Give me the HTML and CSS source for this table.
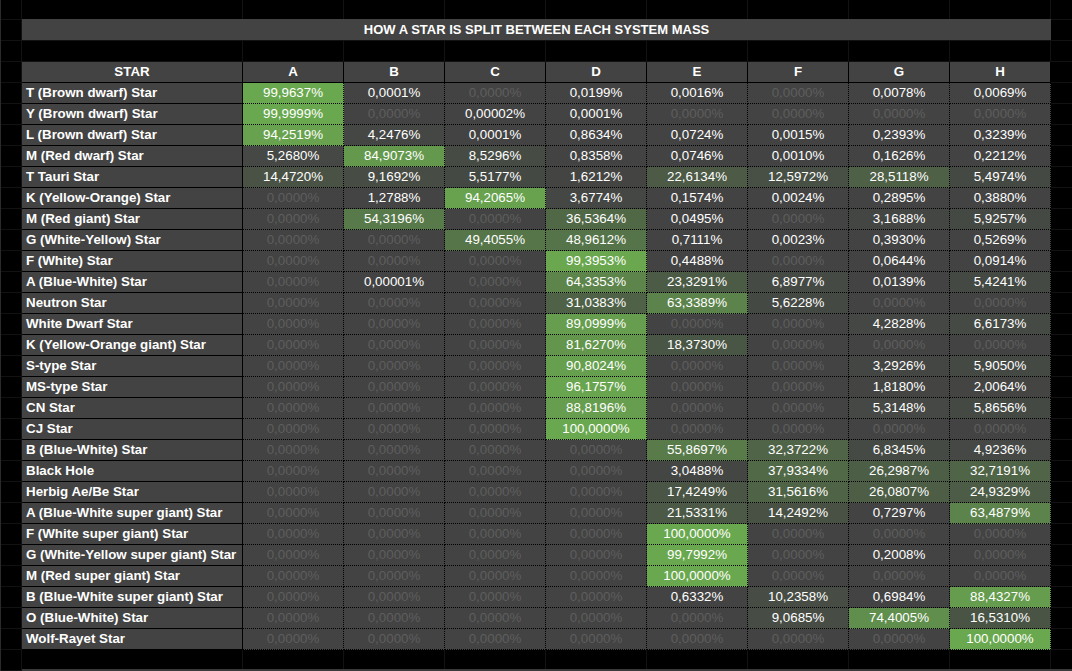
FILE: index.html
```html
<!DOCTYPE html>
<html lang="en">
<head>
<meta charset="utf-8">
<title>How a star is split between each system mass</title>
<link rel="stylesheet" href="styles.css">
</head>
<body>
<main class="page">
  <div class="title">HOW A STAR IS SPLIT BETWEEN EACH SYSTEM MASS</div>
  <div class="sheet">
    <div class="h">STAR</div><div class="h">A</div><div class="h">B</div><div class="h">C</div><div class="h">D</div><div class="h">E</div><div class="h">F</div><div class="h">G</div><div class="h">H</div>

    <div class="lbl">T (Brown dwarf) Star</div><div class="v" style="background:#6aa84f">99,9637%</div><div class="v">0,0001%</div><div class="v z">0,0000%</div><div class="v">0,0199%</div><div class="v">0,0016%</div><div class="v z">0,0000%</div><div class="v">0,0078%</div><div class="v">0,0069%</div>

    <div class="lbl">Y (Brown dwarf) Star</div><div class="v" style="background:#6aa84f">99,9999%</div><div class="v z">0,0000%</div><div class="v">0,00002%</div><div class="v">0,0001%</div><div class="v z">0,0000%</div><div class="v z">0,0000%</div><div class="v z">0,0000%</div><div class="v z">0,0000%</div>

    <div class="lbl">L (Brown dwarf) Star</div><div class="v" style="background:#68a24e">94,2519%</div><div class="v" style="background:#454744">4,2476%</div><div class="v">0,0001%</div><div class="v">0,8634%</div><div class="v">0,0724%</div><div class="v">0,0015%</div><div class="v">0,2393%</div><div class="v">0,3239%</div>

    <div class="lbl">M (Red dwarf) Star</div><div class="v" style="background:#454844">5,2680%</div><div class="v" style="background:#64994d">84,9073%</div><div class="v" style="background:#464c44">8,5296%</div><div class="v">0,8358%</div><div class="v">0,0746%</div><div class="v">0,0010%</div><div class="v">0,1626%</div><div class="v">0,2212%</div>

    <div class="lbl">T Tauri Star</div><div class="v" style="background:#495245">14,4720%</div><div class="v" style="background:#474c44">9,1692%</div><div class="v" style="background:#454944">5,5177%</div><div class="v" style="background:#444543">1,6212%</div><div class="v" style="background:#4c5a46">22,6134%</div><div class="v" style="background:#485045">12,5972%</div><div class="v" style="background:#4e6046">28,5118%</div><div class="v" style="background:#454944">5,4974%</div>

    <div class="lbl">K (Yellow-Orange) Star</div><div class="v z">0,0000%</div><div class="v" style="background:#434443">1,2788%</div><div class="v" style="background:#68a24e">94,2065%</div><div class="v" style="background:#444743">3,6774%</div><div class="v">0,1574%</div><div class="v">0,0024%</div><div class="v">0,2895%</div><div class="v">0,3880%</div>

    <div class="lbl">M (Red giant) Star</div><div class="v z">0,0000%</div><div class="v" style="background:#587a4a">54,3196%</div><div class="v z">0,0000%</div><div class="v" style="background:#516847">36,5364%</div><div class="v">0,0495%</div><div class="v z">0,0000%</div><div class="v" style="background:#444643">3,1688%</div><div class="v" style="background:#454944">5,9257%</div>

    <div class="lbl">G (White-Yellow) Star</div><div class="v z">0,0000%</div><div class="v z">0,0000%</div><div class="v" style="background:#567549">49,4055%</div><div class="v" style="background:#567449">48,9612%</div><div class="v">0,7111%</div><div class="v">0,0023%</div><div class="v">0,3930%</div><div class="v">0,5269%</div>

    <div class="lbl">F (White) Star</div><div class="v z">0,0000%</div><div class="v z">0,0000%</div><div class="v z">0,0000%</div><div class="v" style="background:#6aa74f">99,3953%</div><div class="v">0,4488%</div><div class="v z">0,0000%</div><div class="v">0,0644%</div><div class="v">0,0914%</div>

    <div class="lbl">A (Blue-White) Star</div><div class="v z">0,0000%</div><div class="v">0,00001%</div><div class="v z">0,0000%</div><div class="v" style="background:#5c844b">64,3353%</div><div class="v" style="background:#4c5b46">23,3291%</div><div class="v" style="background:#464a44">6,8977%</div><div class="v">0,0139%</div><div class="v" style="background:#454944">5,4241%</div>

    <div class="lbl">Neutron Star</div><div class="v z">0,0000%</div><div class="v z">0,0000%</div><div class="v z">0,0000%</div><div class="v" style="background:#4f6247">31,0383%</div><div class="v" style="background:#5c834b">63,3389%</div><div class="v" style="background:#454944">5,6228%</div><div class="v z">0,0000%</div><div class="v z">0,0000%</div>

    <div class="lbl">White Dwarf Star</div><div class="v z">0,0000%</div><div class="v z">0,0000%</div><div class="v z">0,0000%</div><div class="v" style="background:#669d4e">89,0999%</div><div class="v z">0,0000%</div><div class="v z">0,0000%</div><div class="v" style="background:#454744">4,2828%</div><div class="v" style="background:#464a44">6,6173%</div>

    <div class="lbl">K (Yellow-Orange giant) Star</div><div class="v z">0,0000%</div><div class="v z">0,0000%</div><div class="v z">0,0000%</div><div class="v" style="background:#63954d">81,6270%</div><div class="v" style="background:#4a5645">18,3730%</div><div class="v z">0,0000%</div><div class="v z">0,0000%</div><div class="v z">0,0000%</div>

    <div class="lbl">S-type Star</div><div class="v z">0,0000%</div><div class="v z">0,0000%</div><div class="v z">0,0000%</div><div class="v" style="background:#669f4e">90,8024%</div><div class="v z">0,0000%</div><div class="v z">0,0000%</div><div class="v" style="background:#444643">3,2926%</div><div class="v" style="background:#454944">5,9050%</div>

    <div class="lbl">MS-type Star</div><div class="v z">0,0000%</div><div class="v z">0,0000%</div><div class="v z">0,0000%</div><div class="v" style="background:#69a44f">96,1757%</div><div class="v z">0,0000%</div><div class="v z">0,0000%</div><div class="v" style="background:#444543">1,8180%</div><div class="v" style="background:#444543">2,0064%</div>

    <div class="lbl">CN Star</div><div class="v z">0,0000%</div><div class="v z">0,0000%</div><div class="v z">0,0000%</div><div class="v" style="background:#669d4e">88,8196%</div><div class="v z">0,0000%</div><div class="v z">0,0000%</div><div class="v" style="background:#454844">5,3148%</div><div class="v" style="background:#454944">5,8656%</div>

    <div class="lbl">CJ Star</div><div class="v z">0,0000%</div><div class="v z">0,0000%</div><div class="v z">0,0000%</div><div class="v" style="background:#6aa84f">100,0000%</div><div class="v z">0,0000%</div><div class="v z">0,0000%</div><div class="v z">0,0000%</div><div class="v z">0,0000%</div>

    <div class="lbl">B (Blue-White) Star</div><div class="v z">0,0000%</div><div class="v z">0,0000%</div><div class="v z">0,0000%</div><div class="v z">0,0000%</div><div class="v" style="background:#597b4a">55,8697%</div><div class="v" style="background:#506447">32,3722%</div><div class="v" style="background:#464a44">6,8345%</div><div class="v" style="background:#454844">4,9236%</div>

    <div class="lbl">Black Hole</div><div class="v z">0,0000%</div><div class="v z">0,0000%</div><div class="v z">0,0000%</div><div class="v z">0,0000%</div><div class="v" style="background:#444643">3,0488%</div><div class="v" style="background:#526948">37,9334%</div><div class="v" style="background:#4d5e46">26,2987%</div><div class="v" style="background:#506447">32,7191%</div>

    <div class="lbl">Herbig Ae/Be Star</div><div class="v z">0,0000%</div><div class="v z">0,0000%</div><div class="v z">0,0000%</div><div class="v z">0,0000%</div><div class="v" style="background:#4a5545">17,4249%</div><div class="v" style="background:#4f6347">31,5616%</div><div class="v" style="background:#4d5d46">26,0807%</div><div class="v" style="background:#4d5c46">24,9329%</div>

    <div class="lbl">A (Blue-White super giant) Star</div><div class="v z">0,0000%</div><div class="v z">0,0000%</div><div class="v z">0,0000%</div><div class="v z">0,0000%</div><div class="v" style="background:#4b5946">21,5331%</div><div class="v" style="background:#495145">14,2492%</div><div class="v">0,7297%</div><div class="v" style="background:#5c834b">63,4879%</div>

    <div class="lbl">F (White super giant) Star</div><div class="v z">0,0000%</div><div class="v z">0,0000%</div><div class="v z">0,0000%</div><div class="v z">0,0000%</div><div class="v" style="background:#6aa84f">100,0000%</div><div class="v z">0,0000%</div><div class="v z">0,0000%</div><div class="v z">0,0000%</div>

    <div class="lbl">G (White-Yellow super giant) Star</div><div class="v z">0,0000%</div><div class="v z">0,0000%</div><div class="v z">0,0000%</div><div class="v z">0,0000%</div><div class="v" style="background:#6aa84f">99,7992%</div><div class="v z">0,0000%</div><div class="v">0,2008%</div><div class="v z">0,0000%</div>

    <div class="lbl">M (Red super giant) Star</div><div class="v z">0,0000%</div><div class="v z">0,0000%</div><div class="v z">0,0000%</div><div class="v z">0,0000%</div><div class="v" style="background:#6aa84f">100,0000%</div><div class="v z">0,0000%</div><div class="v z">0,0000%</div><div class="v z">0,0000%</div>

    <div class="lbl">B (Blue-White super giant) Star</div><div class="v z">0,0000%</div><div class="v z">0,0000%</div><div class="v z">0,0000%</div><div class="v z">0,0000%</div><div class="v">0,6332%</div><div class="v" style="background:#474d44">10,2358%</div><div class="v">0,6984%</div><div class="v" style="background:#659c4e">88,4327%</div>

    <div class="lbl">O (Blue-White) Star</div><div class="v z">0,0000%</div><div class="v z">0,0000%</div><div class="v z">0,0000%</div><div class="v z">0,0000%</div><div class="v z">0,0000%</div><div class="v" style="background:#474c44">9,0685%</div><div class="v" style="background:#608e4c">74,4005%</div><div class="v" style="background:#495445">16,5310%</div>

    <div class="lbl">Wolf-Rayet Star</div><div class="v z">0,0000%</div><div class="v z">0,0000%</div><div class="v z">0,0000%</div><div class="v z">0,0000%</div><div class="v z">0,0000%</div><div class="v z">0,0000%</div><div class="v z">0,0000%</div><div class="v" style="background:#6aa84f">100,0000%</div>
  </div>
</main>
</body>
</html>
```

FILE: styles.css
```css
html, body {
  margin: 0;
  padding: 0;
}

body {
  min-height: 671px;
  background-color: #000;
  background-image:
    linear-gradient(#2a2a2a, #2a2a2a),
    linear-gradient(#3a3a3a, #3a3a3a),
    linear-gradient(#121212, #121212),
    repeating-linear-gradient(to right, #121212 0 1px, transparent 1px 101px),
    linear-gradient(#121212 0 1px, transparent 1px);
  background-size:
    1px 100%,
    100% 2px,
    1px 100%,
    809px 100%,
    100% 21px;
  background-position:
    0 0,
    22px 669px,
    21px 0,
    242px 0,
    0 19px;
  background-repeat:
    no-repeat,
    no-repeat,
    no-repeat,
    no-repeat,
    repeat;
  font-family: "Liberation Sans", Arial, sans-serif;
  font-size: 13.33px;
  color: #fff;
}

.page {
  padding: 19px 0 0 22px;
}

.title {
  width: 1029px;
  height: 21px;
  line-height: 21px;
  background: #434343;
  text-align: center;
  font-weight: bold;
  font-size: 13px;
  margin-bottom: 22px;
}

.sheet {
  display: grid;
  grid-template-columns: 221px repeat(8, 101px);
  grid-auto-rows: 21px;
  width: 1029px;
}

.sheet > div {
  box-sizing: border-box;
  height: 21px;
  line-height: 20px;
  background: #434343;
  white-space: nowrap;
  overflow: hidden;
}

.h {
  text-align: center;
  font-weight: bold;
  border-right: 1px solid #000;
  border-bottom: 1px solid #000;
}

.lbl {
  font-weight: bold;
  padding-left: 4px;
  border-right: 1px solid #000;
  border-bottom: 1px solid #000;
}

.v {
  text-align: center;
  border-right: 1px dotted #000;
  border-bottom: 1px dotted #000;
}

.v.z {
  color: #5e5e5e;
}
```
